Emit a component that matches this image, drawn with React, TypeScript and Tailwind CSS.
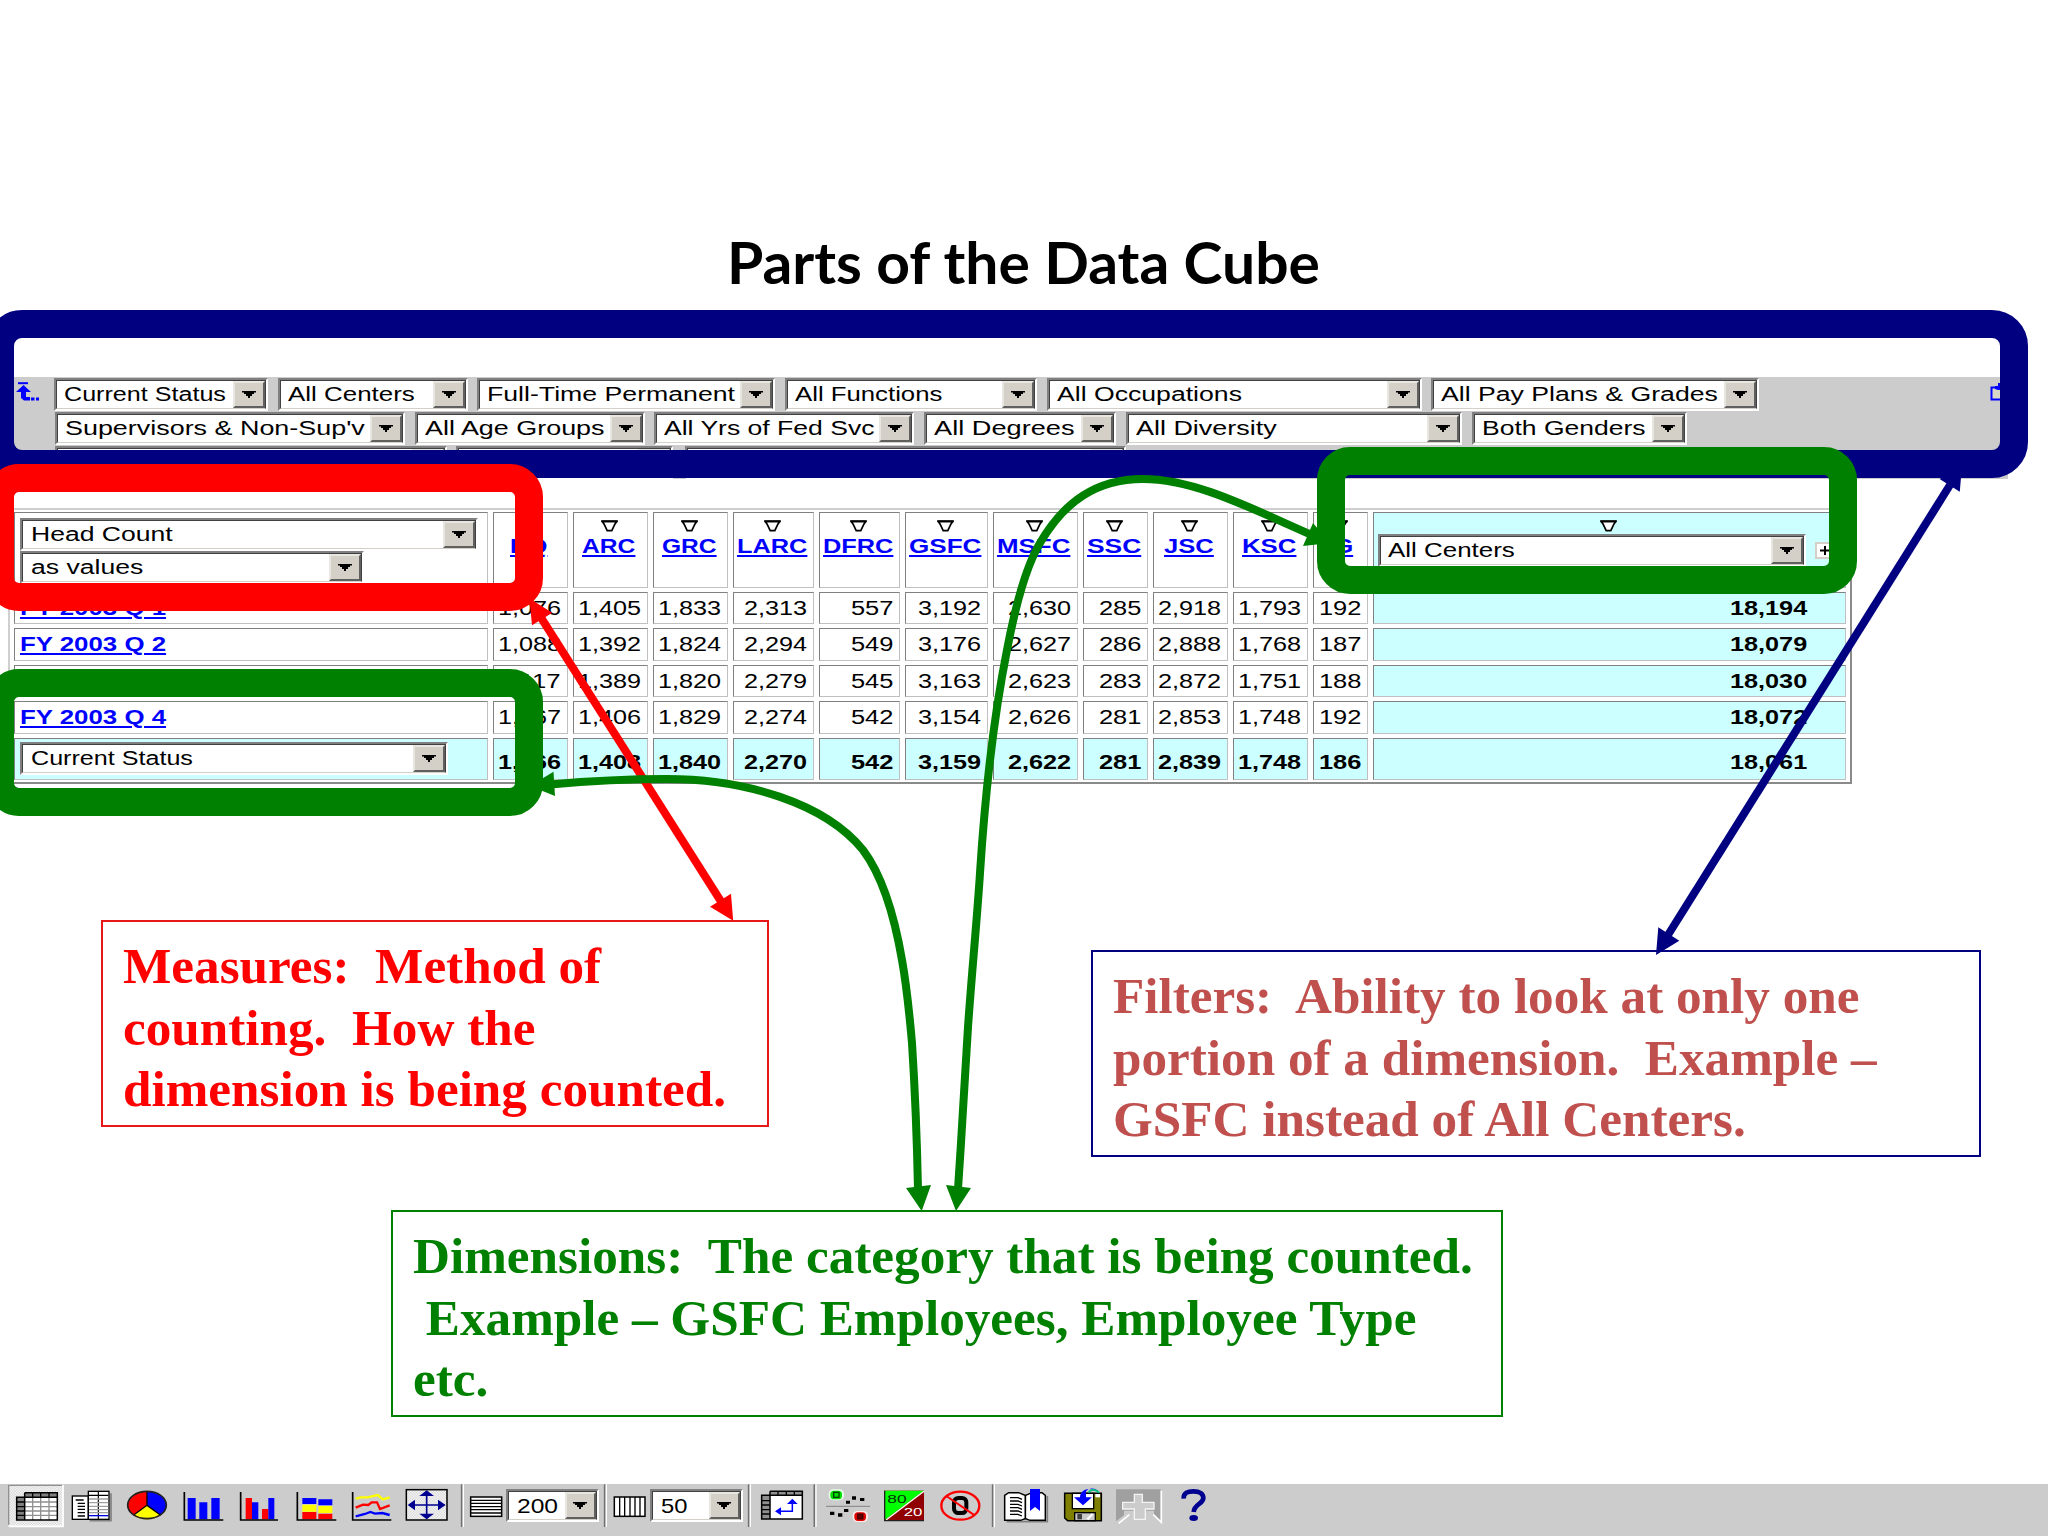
import React, { useLayoutEffect, useRef, useState } from "react";

/* Text stretched horizontally to an exact width. */
function Fit({ w, children, right = false }: { w: number; children: React.ReactNode; right?: boolean }) {
  const ref = useRef<HTMLSpanElement>(null);
  const [scale, setScale] = useState(1);
  useLayoutEffect(() => {
    if (ref.current) setScale(w / ref.current.offsetWidth);
  }, [w]);
  return (
    <span className={right ? "flex justify-end whitespace-pre" : "flex whitespace-pre"} style={{ width: w }}>
      <span
        ref={ref}
        className={right ? "inline-block shrink-0 origin-right" : "inline-block shrink-0 origin-left"}
        style={{ transform: `scaleX(${scale})` }}
      >
        {children}
      </span>
    </span>
  );
}

function Select({ w, tw, label, pad = 7 }: { w: number; tw: number; label: string; pad?: number }) {
  return (
    <div
      className="flex h-[33px] shrink-0 border-2 border-t-[#808080] border-l-[#808080] border-r-white border-b-white bg-white"
      style={{ width: w }}
    >
      <div className="flex min-w-0 flex-1 justify-between border border-t-[#404040] border-l-[#404040] border-r-[#404040] border-b-[#d4d0c8]">
        <div className="text-[20px] leading-[27px]" style={{ paddingLeft: pad }}>
          {label && <Fit w={tw}>{label}</Fit>}
        </div>
        <div className="flex h-[27px] w-[32px] shrink-0 items-center justify-center border-2 border-t-[#e8e6e0] border-l-[#e8e6e0] border-r-[#606060] border-b-[#606060] bg-[#d4d0c8]">
          <svg width="14" height="7" viewBox="0 0 14 7">
            <path d="M0 0H14V1.5H12V3H10V5H8V7H6V5H4V3H2V1.5H0Z" fill="#000" />
          </svg>
        </div>
      </div>
    </div>
  );
}

const row1: [string, number, number, number][] = [
  ["Current Status", 214, 162, 10],
  ["All Centers", 190, 127, 9],
  ["Full-Time Permanent", 298, 248, 10],
  ["All Functions", 252, 148, 10],
  ["All Occupations", 375, 185, 9],
  ["All Pay Plans & Grades", 328, 277, 0],
];
const row2: [string, number, number, number][] = [
  ["Supervisors & Non-Sup'v", 350, 300, 10],
  ["All Age Groups", 230, 179, 9],
  ["All Yrs of Fed Svc", 260, 211, 10],
  ["All Degrees", 192, 140, 10],
  ["All Diversity", 336, 140, 10],
  ["Both Genders", 215, 163, 0],
];
const row3: number[][] = [
  [392, 9],
  [217, 12],
  [441, 0],
];

function Tri() {
  return (
    <svg width="17" height="12" viewBox="0 0 17 12" className="mr-[2px] block">
      <path d="M1.2 1.3H15.8L14 4L10.8 10.6H6.2L3 4Z" fill="#fff" stroke="#000" strokeWidth="1.7" />
      <path d="M0.4 1.3H16.6" stroke="#000" strokeWidth="2" />
    </svg>
  );
}

const cols: [string, number][] = [
  ["HQ", 38], ["ARC", 54], ["GRC", 55], ["LARC", 70], ["DFRC", 70], ["GSFC", 72],
  ["MSFC", 74], ["SSC", 54], ["JSC", 50], ["KSC", 54], ["IG", 27],
];

const data: string[][] = [
  ["FY 2003 Q 1", "1,076", "1,405", "1,833", "2,313", "557", "3,192", "2,630", "285", "2,918", "1,793", "192", "18,194"],
  ["FY 2003 Q 2", "1,088", "1,392", "1,824", "2,294", "549", "3,176", "2,627", "286", "2,888", "1,768", "187", "18,079"],
  ["FY 2003 Q 3", "1,117", "1,389", "1,820", "2,279", "545", "3,163", "2,623", "283", "2,872", "1,751", "188", "18,030"],
  ["FY 2003 Q 4", "1,067", "1,406", "1,829", "2,274", "542", "3,154", "2,626", "281", "2,853", "1,748", "192", "18,072"],
  ["Current Status", "1,066", "1,408", "1,840", "2,270", "542", "3,159", "2,622", "281", "2,839", "1,748", "186", "18,061"],
];

const cell = "border border-t-[#808080] border-l-[#808080] border-r-[#c0c0c0] border-b-[#c0c0c0] overflow-hidden";

function Table() {
  return (
    <div className="ml-[8px] mt-[29px] w-[1844px] border-2 border-t-[#cfcfcf] border-l-[#cfcfcf] border-r-[#8a8a8a] border-b-[#8a8a8a] bg-white pt-[2px] pl-[4px] pb-[2px]">
      <div className="grid grid-cols-[474px_75px_75px_75px_81px_81px_83px_85px_65px_75px_75px_55px_473px] grid-rows-[76px_32px_33px_32px_33px_42px] gap-x-[5px] gap-y-[4px]">
        <div className={`${cell} pl-[5px] pt-[5px]`}>
          <Select w={458} tw={142} label="Head Count" pad={8} />
          <Select w={344} tw={113} label="as values" pad={8} />
        </div>
        {cols.map(([name, w]) => (
          <div key={name} className={`${cell} flex flex-col items-center pt-[7px] text-[21px] leading-[24px] font-bold text-[#0000ff]`}>
            <Tri />
            <div className="mt-[2px] mr-[3px] underline decoration-2 underline-offset-[2px]">
              <Fit w={w}>{name}</Fit>
            </div>
          </div>
        ))}
        <div className={`${cell} bg-[#ccffff] pt-[7px]`}>
          <div className="flex justify-center">
            <Tri />
          </div>
          <div className="ml-[4px] mt-[2px] flex items-center gap-[9px]">
            <Select w={428} tw={127} label="All Centers" />
            <div className="flex h-[17px] w-[20px] items-center justify-center border-2 border-[#d4d0c8] bg-white">
              <svg width="10" height="9" viewBox="0 0 10 9">
                <path d="M5 0V9M0 4.5H10" stroke="#000" strokeWidth="2" />
              </svg>
            </div>
          </div>
        </div>
        {data.map((r, ri) =>
          r.map((v, ci) => {
            const total = ri === 4;
            if (ci === 0 && total)
              return (
                <div key={v} className={`${cell} bg-[#ccffff] pl-[5px] pt-[3px]`}>
                  <Select w={428} tw={162} label={v} pad={8} />
                </div>
              );
            if (ci === 0)
              return (
                <div key={v} className={`${cell} pl-[5px] text-[20px] leading-[30px] font-bold text-[#0000ff] underline decoration-2 underline-offset-[2px]`}>
                  <Fit w={146}>{v}</Fit>
                </div>
              );
            const wide = ci === 12;
            const w = wide ? 77 : v.length > 3 ? 63 : 42;
            return (
              <div
                key={ri + "-" + ci}
                className={`${cell} flex justify-end text-[20px] ${total ? "bg-[#ccffff] pt-[3px] leading-[40px] font-bold" : "leading-[30px]"} ${wide ? "bg-[#ccffff] pr-[38px] font-bold" : "pr-[6px]"}`}
              >
                <Fit w={w} right>{v}</Fit>
              </div>
            );
          })
        )}
      </div>
    </div>
  );
}

/* Toolbar icons are drawn in thirds of a pixel. */
function Ico({ x, w, children }: { x: number; w: number; children: React.ReactNode }) {
  return (
    <svg className="block shrink-0" width={w / 3} height="52" viewBox={`${x} 24 ${w} 156`}>
      {children}
    </svg>
  );
}

function Sep({ x, w, at }: { x: number; w: number; at: number }) {
  return (
    <Ico x={x} w={w}>
      <path d={`M${at} 25V153`} stroke="#707070" strokeWidth="5" />
      <path d={`M${at + 5} 25V153`} stroke="#fff" strokeWidth="4" />
    </Ico>
  );
}

function ToolSelect({ label, tw }: { label: string; tw: number }) {
  return (
    <div className="mt-[5px] flex h-[33px] w-[93px] shrink-0 border-2 border-t-[#808080] border-l-[#808080] border-r-white border-b-white bg-white">
      <div className="flex flex-1 justify-between border border-t-[#404040] border-l-[#404040] border-r-[#404040] border-b-[#d4d0c8]">
        <div className="pl-[8px] text-[21px] leading-[27px]">
          <Fit w={tw}>{label}</Fit>
        </div>
        <div className="flex w-[31px] items-center justify-center border-2 border-t-[#e8e6e0] border-l-[#e8e6e0] border-r-[#606060] border-b-[#606060] bg-[#d4d0c8]">
          <svg width="14" height="7" viewBox="0 0 14 7">
            <path d="M0 0H14V1.5H12V3H10V5H8V7H6V5H4V3H2V1.5H0Z" fill="#000" />
          </svg>
        </div>
      </div>
    </div>
  );
}

function Toolbar() {
  return (
    <div className="flex h-[52px] w-full shrink-0 items-start bg-[#cccccc]">
      <Ico x={0} w={205}>
        <defs>
          <pattern id="chk" width="8" height="8" patternUnits="userSpaceOnUse">
            <rect width="8" height="8" fill="#fff" />
            <path d="M0 0h4v4h-4zM4 4h4v4h-4z" fill="#d0d0d0" />
          </pattern>
        </defs>
        <rect x="24" y="26" width="167" height="126" fill="url(#chk)" />
        <path d="M26 146V28H186" fill="none" stroke="#909090" strokeWidth="4" />
        <path d="M28 151H189V28" fill="none" stroke="#fff" strokeWidth="5" />
        <path d="M74 50H172V132H50V64H74Z" fill="#fff" />
        <path d="M74 50H172V64H74V132H50V64H74Z" fill="#808080" />
        <path d="M98 64V132M122 64V132M147 64V132M74 78H172M74 92H172M74 105H172M74 118H172" stroke="#909090" strokeWidth="4" />
        <path d="M50 78H74M50 92H74M50 105H74M50 118H74M98 50V64M122 50V64M147 50V64" stroke="#000" strokeWidth="4" />
        <path d="M74 50H172V132H50V64H172M74 50V132" fill="none" stroke="#000" strokeWidth="4.5" />
      </Ico>
      <Ico x={205} w={140}>
        <path d="M270 134H334V52" fill="none" stroke="#808080" strokeWidth="5" />
        <rect x="218" y="60" width="48" height="70" fill="#fff" stroke="#000" strokeWidth="4" />
        <rect x="266" y="46" width="62" height="84" fill="#fff" stroke="#000" strokeWidth="4" />
        <path d="M228 72H252M234 82H256M234 91H256M234 100H256M234 110H256M234 120H256" stroke="#000" strokeWidth="4" />
        <path d="M268 58H326M296 46V130" stroke="#000" strokeWidth="3.5" />
        <path d="M268 69H326M268 80H326M268 91H326M268 101H326M268 110H326" stroke="#a0a0a0" strokeWidth="4" />
        <path d="M268 119H326" stroke="#0000e0" strokeWidth="4" />
      </Ico>
      <Ico x={345} w={175}>
        <ellipse cx="441" cy="88" rx="58" ry="42" fill="#ff0000" />
        <path d="M441 88V46A58 42 0 0 1 482 118Z" fill="#0000ff" />
        <path d="M441 88L482 118A58 42 0 0 1 400 118Z" fill="#ffff00" />
        <path d="M441 46V88L482 118M441 88L400 118" fill="none" stroke="#000" strokeWidth="4" />
        <ellipse cx="441" cy="87" rx="58" ry="41" fill="none" stroke="#222" strokeWidth="5" />
      </Ico>
      <Ico x={520} w={170}>
        <path d="M564 66h24v64h-24zM599 79h24v51h-24zM635 66h25v64h-25z" fill="#0000ff" />
        <path d="M554 48V132H671" fill="none" stroke="#000" strokeWidth="5" />
      </Ico>
      <Ico x={690} w={170}>
        <path d="M737 66h19v64h-19zM786 99h19v31h-19z" fill="#ff0000" />
        <path d="M756 79h19v51h-19zM805 66h18v64h-18z" fill="#0000ff" />
        <path d="M722 48V132H834" fill="none" stroke="#000" strokeWidth="5" />
      </Ico>
      <Ico x={860} w={170}>
        <path d="M906 66h42v18h-42zM954 70h42v18h-42z" fill="#0000ff" />
        <path d="M906 86h42v21h-42zM954 90h42v21h-42z" fill="#ffff00" />
        <path d="M906 108h42v22h-42zM954 113h42v17h-42z" fill="#ff0000" />
        <path d="M891 48V132H1008" fill="none" stroke="#000" strokeWidth="5" />
      </Ico>
      <Ico x={1030} w={165}>
        <path d="M1068 68L1084 64H1104L1134 57L1150 70L1170 64" fill="none" stroke="#ffff00" strokeWidth="7" />
        <path d="M1068 95L1090 86L1106 87L1116 79H1132L1141 99L1170 88" fill="none" stroke="#ff0000" strokeWidth="7" />
        <path d="M1068 121L1096 114L1112 108L1126 113L1148 111L1170 117" fill="none" stroke="#0000ff" strokeWidth="7" />
        <path d="M1059 48V132H1175" fill="none" stroke="#000" strokeWidth="5" />
      </Ico>
      <Ico x={1195} w={185}>
        <rect x="1220" y="41" width="122" height="91" fill="url(#chk)" stroke="#000" strokeWidth="4.5" />
        <path d="M1281 46V128M1228 87H1334" stroke="#000090" strokeWidth="5" />
        <path d="M1281 43L1303 60H1259ZM1281 130L1303 113H1259ZM1224 87L1246 71V103ZM1338 87L1315 71V103Z" fill="#000090" />
      </Ico>
      <Sep x={30} w={18} at={35} />
      <Ico x={48} w={120}>
        <rect x="62" y="63" width="93" height="58" fill="#fff" stroke="#000" strokeWidth="4.5" />
        <path d="M62 73H155M62 82H155M62 92H155M62 101H155M62 111H155" stroke="#000" strokeWidth="4" />
      </Ico>
      <ToolSelect label="200" tw={41} />
      <Sep x={448} w={30} at={465} />
      <Ico x={478} w={122}>
        <rect x="494" y="63" width="92" height="58" fill="#fff" stroke="#000" strokeWidth="4.5" />
        <path d="M510 63V121M525 63V121M541 63V121M556 63V121M571 63V121" stroke="#000" strokeWidth="4" />
      </Ico>
      <ToolSelect label="50" tw={26} />
      <Sep x={880} w={35} at={897} />
      <Ico x={915} w={165}>
        <path d="M963 46H1060V129H938V58H963Z" fill="#fff" />
        <path d="M963 46H1060V58H963V129H938V58H963Z" fill="#909090" />
        <path d="M938 74H963M938 87H963M938 101H963M938 114H963M987 46V58M1012 46V58M1036 46V58" stroke="#000" strokeWidth="4" />
        <path d="M963 46H1060V129H938V58H1060M963 46V129" fill="none" stroke="#000" strokeWidth="4.5" />
        <path d="M990 106H1030V80" fill="none" stroke="#0000ff" strokeWidth="4.5" />
        <path d="M978 106L996 94V118ZM1030 68L1046 84H1014Z" fill="#0000ff" />
      </Ico>
      <Sep x={1080} w={32} at={1096} />
      <Ico x={60} w={165}>
        <path d="M78 91H210" stroke="#909090" strokeWidth="4" />
        <rect x="86" y="40" width="46" height="33" rx="14" fill="#e8ffe8" />
        <rect x="91" y="44" width="35" height="26" rx="11" fill="#00e000" />
        <rect x="101" y="49" width="16" height="15" fill="none" stroke="#004000" strokeWidth="4" />
        <rect x="158" y="105" width="46" height="33" rx="14" fill="#ffe8e8" />
        <rect x="163" y="109" width="35" height="26" rx="11" fill="#e00000" />
        <rect x="173" y="114" width="16" height="15" fill="#600000" stroke="#400000" strokeWidth="3" />
        <path d="M138 74h12v9h-12zM156 61h12v10h-12zM180 66h13v9h-13zM90 107h13v10h-13zM114 112h13v10h-13zM132 99h13v9h-13z" fill="#000" />
      </Ico>
      <Ico x={225} w={170}>
        <rect x="252" y="44" width="120" height="90" fill="#900000" />
        <path d="M254 44H372L254 132Z" fill="#00ff00" />
        <path d="M372 46L258 132" stroke="#fff" strokeWidth="4" />
        <path d="M254 44V134H372" fill="none" stroke="#202020" strokeWidth="4" />
        <text x="262" y="80" fontFamily="Liberation Sans" fontSize="35" textLength="58" lengthAdjust="spacingAndGlyphs" fill="#003000">80</text>
        <text x="311" y="120" fontFamily="Liberation Sans" fontSize="33" textLength="56" lengthAdjust="spacingAndGlyphs" fill="#fff">20</text>
      </Ico>
      <Ico x={395} w={167}>
        <rect x="461" y="66" width="37" height="45" rx="13" fill="none" stroke="#000" strokeWidth="12" />
        <ellipse cx="480" cy="89" rx="57" ry="42" fill="none" stroke="#ff0000" strokeWidth="7" />
        <path d="M438 60L523 118" stroke="#ff0000" strokeWidth="6" />
      </Ico>
      <Sep x={562} w={38} at={579} />
      <Ico x={600} w={165}>
        <path d="M620 137H742V60" fill="none" stroke="#808080" strokeWidth="5" />
        <path d="M614 58L626 50H656L676 58L696 50H726L736 58V133H690L676 128L662 133H614Z" fill="#fff" stroke="#000" strokeWidth="4.5" />
        <path d="M676 58V130" stroke="#000" strokeWidth="5" />
        <path d="M630 65H654L666 70M630 75H654L666 80M630 85H654L666 90M630 95H654L666 100M630 105H654L666 110M630 115H654L666 120" fill="none" stroke="#000" strokeWidth="4" />
        <path d="M690 39H720V105L705 93L690 105Z" fill="#0000ff" />
      </Ico>
      <Ico x={765} w={165}>
        <path d="M794 52H904V134H803L794 126Z" fill="#808000" stroke="#000" strokeWidth="4.5" />
        <rect x="817" y="52" width="64" height="46" fill="#fff" stroke="#000" strokeWidth="4" />
        <rect x="824" y="110" width="62" height="24" fill="#c8c8c8" stroke="#000" strokeWidth="4" />
        <path d="M832 114h14v16h-14z" fill="#404040" />
        <path d="M862 130L878 114" stroke="#fff" strokeWidth="7" />
        <rect x="886" y="54" width="14" height="10" fill="#fff" />
        <path d="M897 48C888 34 866 34 858 46V64H876L849 88L822 64H840C840 40 870 30 897 48Z" fill="#0000ff" />
        <path d="M866 50C872 38 888 40 897 50" fill="none" stroke="#00c080" strokeWidth="5" />
      </Ico>
      <Ico x={930} w={180}>
        <path d="M948 40H1082V136L1062 118V104H972V118L948 136Z" fill="#a0a0a0" />
        <path d="M956 142L988 116M1084 44V139L1060 116" fill="none" stroke="#fff" strokeWidth="5" />
        <path d="M1003 55H1027V79H1062V99H1036V130H1003V99H968V79H1003Z" fill="#cccccc" stroke="#f4f4f4" strokeWidth="4" />
      </Ico>
      <Ico x={1110} w={150}>
        <path d="M1151 68C1150 50 1164 46 1180 46C1200 46 1210 54 1210 66C1210 84 1183 84 1181 108" fill="none" stroke="#000090" strokeWidth="14" />
        <ellipse cx="1181" cy="126" rx="13" ry="9" fill="#000090" />
      </Ico>
    </div>
  );
}

function Arrows() {
  return (
    <svg className="absolute left-0 top-0" width="2048" height="1536" viewBox="0 0 2048 1536">
      <g stroke="#ff0000" fill="#ff0000">
        <path d="M540 616L722 903" strokeWidth="8" />
        <path d="M529.4 598.5L552.3 612.7L532 625.3ZM733.2 920.7L731 893.7L710 906.7Z" stroke="none" />
      </g>
      <g stroke="#000080" fill="#000080">
        <path d="M1950 485L1668 935" strokeWidth="8" />
        <path d="M1962 465L1939.6 479L1959.8 491.7ZM1656 955L1679.3 940.7L1658.3 927.3Z" stroke="none" />
      </g>
      <g stroke="#008000" fill="none" strokeWidth="8">
        <path d="M550 784.5C600 780 633 779 667 779C745 779 825 803 863 850C884 878 896 925 902 960C907 988 910 1020 912 1043C915 1090 917 1140 918 1189" />
        <path d="M958 1189C962 1130 966 1060 968 1027C972 970 977 920 980 873C986 780 996 705 1007 650C1015 608 1025 568 1040 543C1064 502 1096 479 1143 479C1195 479 1250 508 1312 535" />
        <path d="M530 786L553.5 771.7L555 796ZM921.7 1211L906 1188L931 1185ZM956 1211L946 1185L971 1188ZM1330 543L1313 523L1303 546Z" fill="#008000" stroke="none" />
      </g>
    </svg>
  );
}

export default function App() {
  return (
    <div className="relative flex h-[1536px] w-[2048px] flex-col overflow-hidden bg-white font-['Liberation_Sans',sans-serif] text-black">
      <div className="flex h-[377px] shrink-0 justify-center pt-[227px] pr-[2px] font-['Lato',sans-serif] text-[57px] leading-[70px] font-bold">
        <Fit w={593}>Parts of the Data Cube</Fit>
      </div>
      <div className="flex h-[102px] w-[2008px] shrink-0 overflow-hidden bg-[#cccccc]">
        <svg className="ml-[16px] mt-[5px] shrink-0" width="38" height="20" viewBox="0 0 38 20">
          <path d="M2 1.2H12" stroke="#0000ff" strokeWidth="2" />
          <path d="M7.5 3L15 10H10V15H14V18.5H8L5 16V10H0Z" fill="#0000ff" />
          <path d="M15 15.5h3.5v3h-3.5zM20 15.5h3v3h-3z" fill="#0000ff" />
        </svg>
        <div className="flex w-[1936px] flex-col gap-[1px] pt-[1px]">
          <div className="flex">
            {row1.map(([l, w, tw, g]) => (
              <div key={l} style={{ marginRight: g }}>
                <Select w={w} tw={tw} label={l} />
              </div>
            ))}
          </div>
          <div className="flex pl-px">
            {row2.map(([l, w, tw, g]) => (
              <div key={l} style={{ marginRight: g }}>
                <Select w={w} tw={tw} label={l} />
              </div>
            ))}
          </div>
          <div className="flex pl-px">
            {row3.map(([w, g]) => (
              <div key={w} style={{ marginRight: g }}>
                <Select w={w} tw={0} label="" />
              </div>
            ))}
          </div>
        </div>
        <svg className="mt-[5px] shrink-0" width="18" height="20" viewBox="0 0 18 20">
          <rect x="1.5" y="5.5" width="14" height="12" fill="#d8d8c8" stroke="#0000ff" strokeWidth="2" />
          <path d="M5 7V4H8V1H18V8H8" fill="#0000ff" />
        </svg>
      </div>
      <Table />
      <div className="flex-1" />
      <Toolbar />

      {/* highlight frames over the page */}
      <div className="absolute left-[-14px] top-[310px] h-[168px] w-[2042px] rounded-[36px] border-[28px] border-[#000080]" />
      <div className="absolute left-[-14px] top-[464px] h-[147px] w-[557px] rounded-[33px] border-[28px] border-[#ff0000]" />
      <div className="absolute left-[-14px] top-[669px] h-[147px] w-[557px] rounded-[33px] border-[28px] border-[#008000]" />
      <div className="absolute left-[1317px] top-[447px] h-[147px] w-[540px] rounded-[33px] border-[28px] border-[#008000]" />
      <Arrows />

      {/* callouts */}
      <div className="absolute left-[101px] top-[920px] h-[207px] w-[668px] border-2 border-[#e81818] pl-[20px] pt-[13px] font-['Liberation_Serif',serif] text-[51.2px] leading-[61.5px] font-bold whitespace-pre text-[#ff0000]">
        {"Measures:  Method of\ncounting.  How the\ndimension is being counted."}
      </div>
      <div className="absolute left-[1091px] top-[950px] h-[207px] w-[890px] border-2 border-[#000080] pl-[20px] pt-[13px] font-['Liberation_Serif',serif] text-[51.2px] leading-[61.5px] font-bold whitespace-pre text-[#c0504d]">
        {"Filters:  Ability to look at only one\nportion of a dimension.  Example –\nGSFC instead of All Centers."}
      </div>
      <div className="absolute left-[391px] top-[1210px] h-[207px] w-[1112px] border-2 border-[#008000] pl-[20px] pt-[13px] font-['Liberation_Serif',serif] text-[51.2px] leading-[61.5px] font-bold whitespace-pre text-[#008000]">
        {"Dimensions:  The category that is being counted.\n Example – GSFC Employees, Employee Type\netc."}
      </div>
    </div>
  );
}
